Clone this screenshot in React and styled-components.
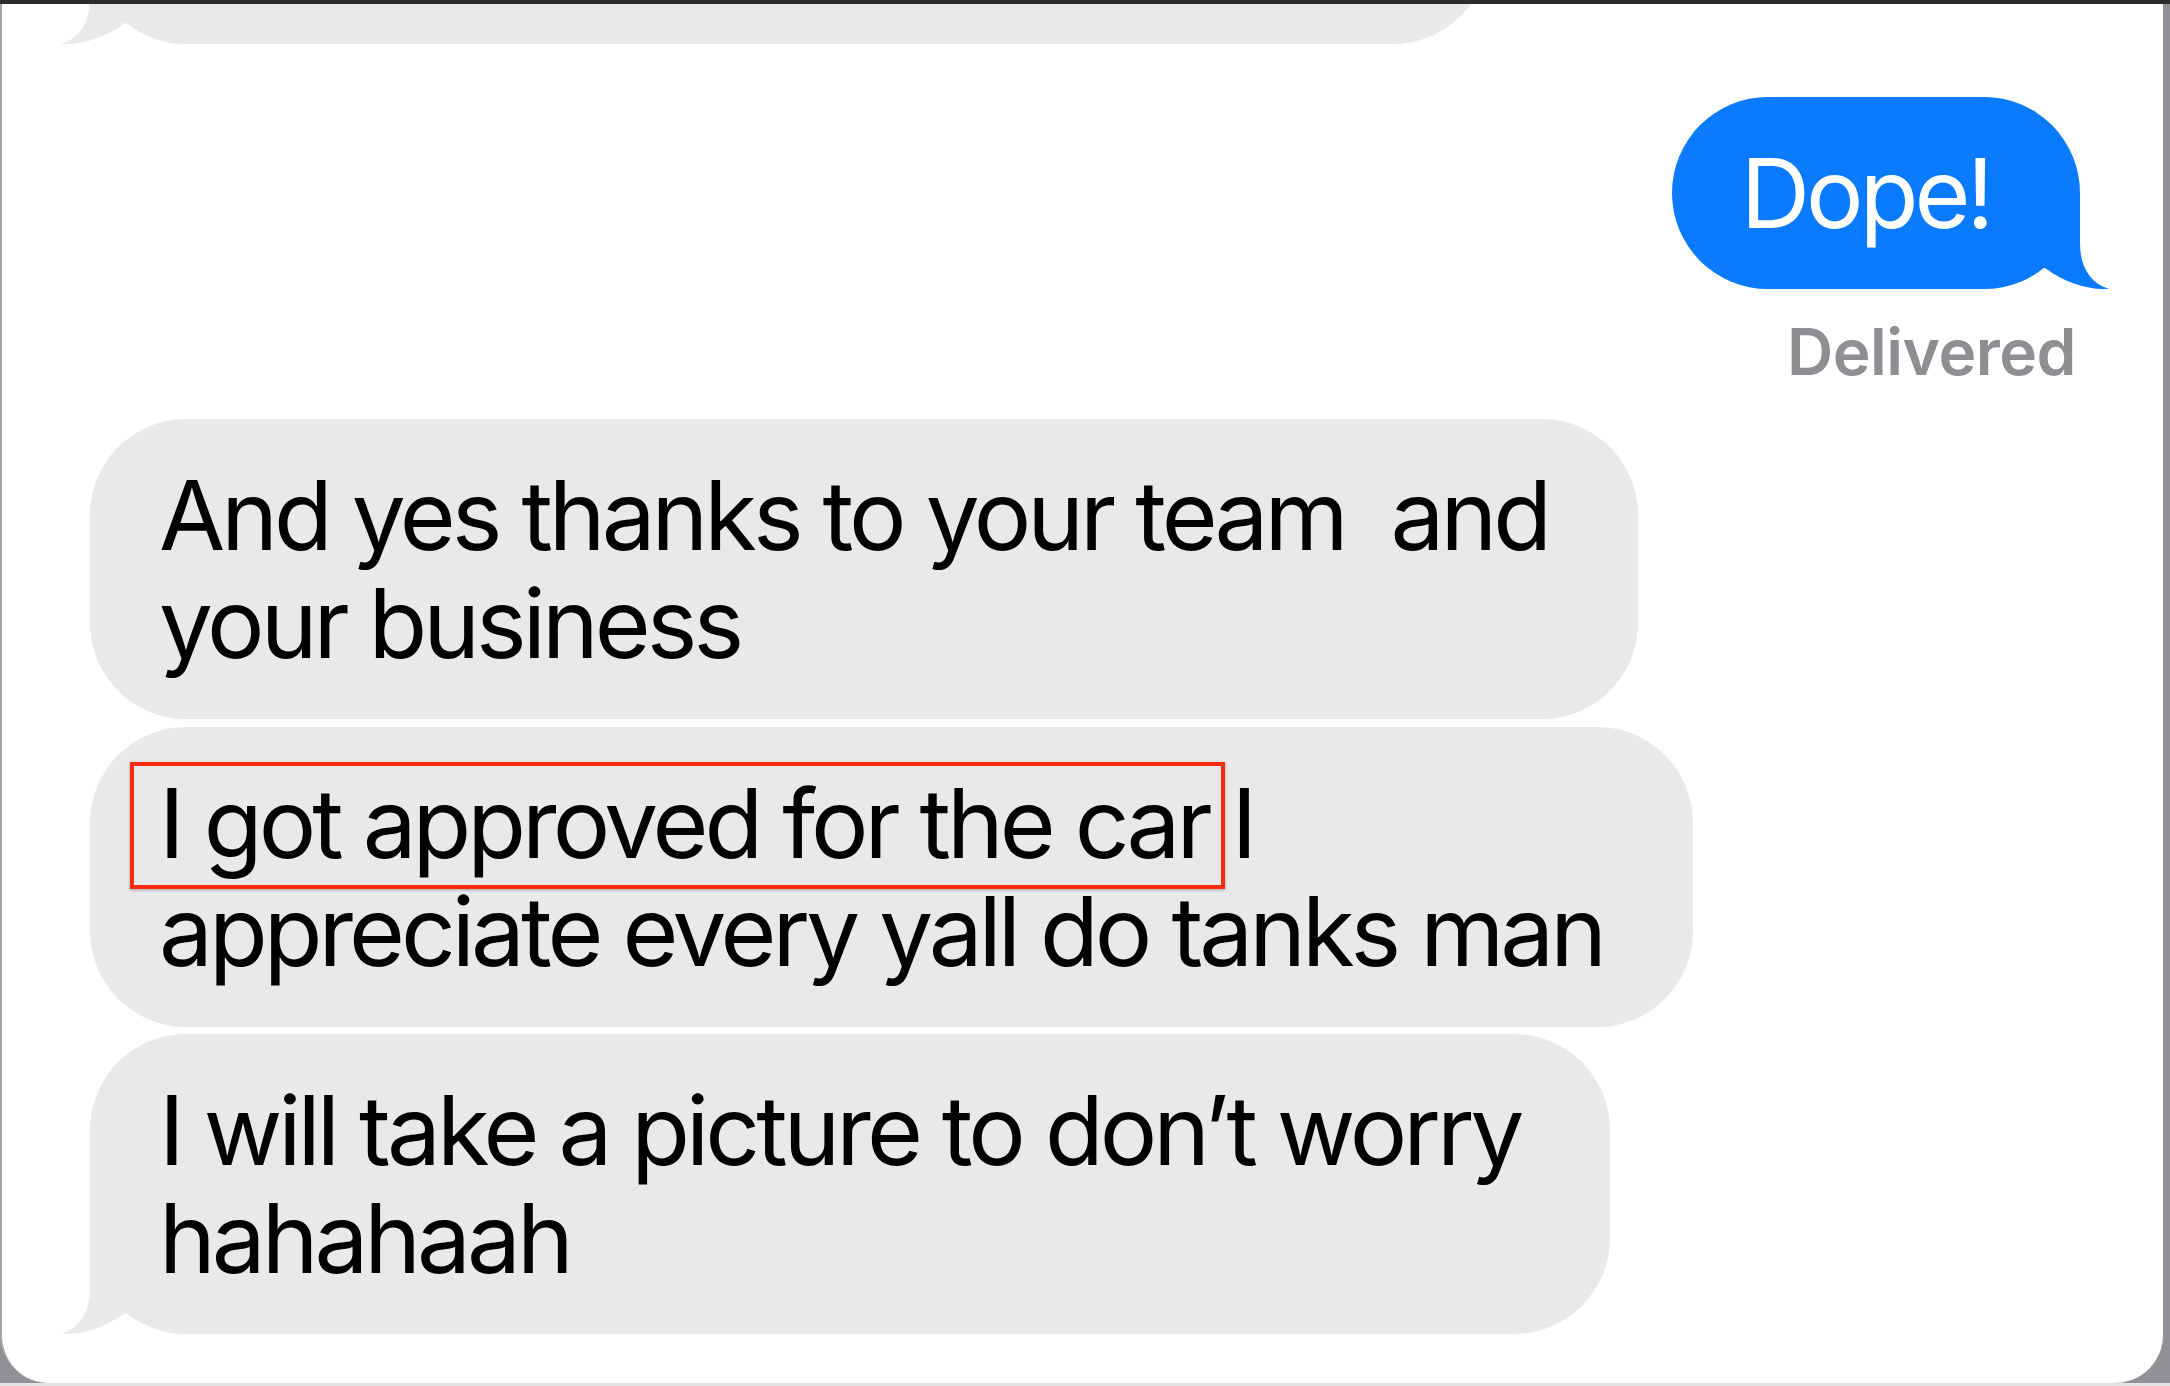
import styled, { createGlobalStyle } from 'styled-components';

const GlobalStyle = createGlobalStyle`
	html, body {
		margin: 0;
		padding: 0;
	}
	body {
		background: #8f9195;
		font-family: Inter, "Liberation Sans", sans-serif;
	}
`;

const BLUE = '#0a7aff';
const GRAY = '#e9e9eb';

const Frame = styled.div`
	width: 2170px;
	height: 1386px;
	box-sizing: border-box;
	display: flex;
	background: #8f9195;
	border-top: 4px solid #2c2c2c;
	border-bottom: 3px solid #e4e4e6;
	padding-right: 7px;
	overflow: hidden;
`;

const Screen = styled.div`
	flex: 1;
	display: flex;
	flex-direction: column;
	background: #fff;
	border-left: 2px solid #a3a3a6;
	border-radius: 0 0 48px 48px;
	overflow: hidden;
	padding: 0 83px 0 88px;
`;

const Bubble = styled.div`
	position: relative;
	align-self: ${(p) => (p.$mine ? 'flex-end' : 'flex-start')};
	background: ${(p) => (p.$mine ? BLUE : GRAY)};
	color: ${(p) => (p.$mine ? '#fff' : '#000')};
	border-radius: 96px;
	padding: 42px 90px 42px 69px;
	margin-top: ${(p) => p.$gap || 0}px;
	font-size: 96px;
	line-height: 108px;
	letter-spacing: -4px;
	white-space: pre;
`;

// bottom of a bubble that has scrolled off the top
const EarlierBubble = styled(Bubble)`
	box-sizing: border-box;
	width: 1399px;
	height: 200px;
	padding: 0;
	margin-top: -160px;
`;

const TailSvg = styled.svg`
	position: absolute;
	bottom: 0;
	width: 90px;
	height: 96px;
	${(p) => (p.$mine ? 'right: -30px;' : 'left: -30px; transform: scaleX(-1);')}
`;

function Tail({ mine }) {
	return (
		<TailSvg $mine={mine} viewBox="0 0 90 96" aria-hidden="true">
			<path
				d="M10 0 L60 0 L60 50 C60 74 70 90 89 96 C72 97 48 92 25 75 L10 75 Z"
				fill={mine ? BLUE : GRAY}
			/>
		</TailSvg>
	);
}

const Status = styled.div`
	align-self: flex-end;
	margin: 24px 4px 0 0;
	font-size: 64px;
	line-height: 77px;
	font-weight: 600;
	letter-spacing: -0.5px;
	color: #8e8e93;
`;

const Highlight = styled.span`
	display: inline-block;
	margin: -7px -16px -12px -29px;
	padding: 3px 12px 8px 25px;
	border: 4px solid #fa2a0e;
	box-shadow: 0 1px 3px rgba(0, 0, 0, 0.3);
`;

export default function App() {
	return (
		<>
			<GlobalStyle />
			<Frame>
				<Screen>
					<EarlierBubble>
						<Tail />
					</EarlierBubble>
					<Bubble $mine $gap={53}>
						Dope!
						<Tail mine />
					</Bubble>
					<Status>Delivered</Status>
					<Bubble $gap={29}>
						And yes thanks to your team  and
						<br />
						your business
					</Bubble>
					<Bubble $gap={8}>
						<Highlight>I got approved for the car</Highlight> I
						<br />
						appreciate every yall do tanks man
					</Bubble>
					<Bubble $gap={7}>
						I will take a picture to don’t worry
						<br />
						hahahaah
						<Tail />
					</Bubble>
				</Screen>
			</Frame>
		</>
	);
}
